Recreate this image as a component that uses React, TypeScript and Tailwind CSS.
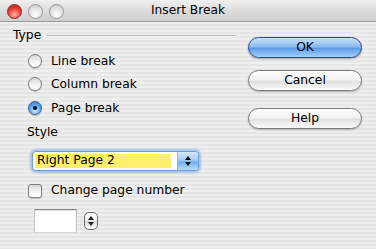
import React from "react";

const font = { fontFamily: '"DejaVu Sans", "Liberation Sans", sans-serif' };

function Radio({ checked, label }: { checked?: boolean; label: string }) {
  return (
    <div className="flex h-[23.5px] items-center pl-[28px]">
      {checked ? (
        <div className="flex h-[14px] w-[14px] items-center justify-center rounded-full border border-[#3b5f95] bg-[radial-gradient(circle_at_50%_75%,#c8ecff_0%,#6aaef0_45%,#2f78d4_100%)] shadow-[0_1px_1px_rgba(0,0,0,0.25)]">
          <div className="h-[4px] w-[4px] rounded-full bg-[#111]" />
        </div>
      ) : (
        <div className="h-[14px] w-[14px] rounded-full border border-[#7d7d7d] bg-[linear-gradient(180deg,#d6d6d6_0%,#f4f4f4_55%,#ffffff_100%)] shadow-[0_1px_1px_rgba(0,0,0,0.2)]" />
      )}
      <span className="ml-[9px] text-[12.3px] text-black">{label}</span>
    </div>
  );
}

function AquaButton({ label, primary }: { label: string; primary?: boolean }) {
  return (
    <div
      className={
        primary
          ? "flex h-[21px] w-[114px] items-center justify-center rounded-full border border-[#2a4b85] bg-[linear-gradient(180deg,#c9e0f8_0%,#8dbdf0_45%,#5d9de6_55%,#9fd0fb_100%)] text-[12.3px] text-black shadow-[0_1px_2px_rgba(0,0,0,0.35)]"
          : "flex h-[21px] w-[114px] items-center justify-center rounded-full border border-[#7a7a7a] bg-[linear-gradient(180deg,#ffffff_0%,#f2f2f2_45%,#e2e2e2_55%,#fafafa_100%)] text-[12.3px] text-black shadow-[0_1px_2px_rgba(0,0,0,0.25)]"
      }
    >
      {label}
    </div>
  );
}

function Stepper({ blue }: { blue?: boolean }) {
  return (
    <svg width="8" height="12" viewBox="0 0 8 12">
      <path d="M4 1 L7 5 L1 5 Z" fill={blue ? "#111" : "#222"} />
      <path d="M4 11 L7 7 L1 7 Z" fill={blue ? "#111" : "#222"} />
    </svg>
  );
}

export default function App() {
  return (
    <div
      style={font}
      className="flex h-[249px] w-[376px] flex-col overflow-hidden bg-[#ececec]"
    >
      {/* Title bar */}
      <div className="relative flex h-[22px] shrink-0 items-center justify-center rounded-t-[5px] border-b border-[#9a9a9a] bg-[linear-gradient(180deg,#f0f0f0_0%,#dcdcdc_50%,#cfcfcf_100%)]">
        <div className="absolute left-[7px] top-[4px] flex gap-[6px]">
          <div className="h-[15px] w-[15px] rounded-full border border-[#8c2a22] bg-[radial-gradient(circle_at_50%_75%,#ffb3a8_0%,#e8443a_50%,#b01f17_100%)]" />
          <div className="h-[15px] w-[15px] rounded-full border border-[#9a9a9a] bg-[radial-gradient(circle_at_50%_75%,#ffffff_0%,#e2e2e2_55%,#c4c4c4_100%)]" />
          <div className="h-[15px] w-[15px] rounded-full border border-[#9a9a9a] bg-[radial-gradient(circle_at_50%_75%,#ffffff_0%,#e2e2e2_55%,#c4c4c4_100%)]" />
        </div>
        <span className="text-[12.2px] text-black">Insert Break</span>
      </div>

      {/* Body */}
      <div className="flex flex-1 bg-[image:repeating-linear-gradient(180deg,#eeeeee_0px,#eeeeee_2px,#e6e6e6_2px,#e6e6e6_4px)]">
        {/* Left column */}
        <div className="flex w-[236px] flex-col">
          <div className="mt-[5px] flex h-[16px] items-center pl-[13px]">
            <span className="text-[12.3px] text-black">Type</span>
            <div className="ml-[5px] mt-[1px] h-[1px] flex-1 bg-[#b8b8b8] shadow-[0_1px_0_#fafafa]" />
          </div>
          <div className="mt-[6px]">
            <Radio label="Line break" />
            <Radio label="Column break" />
            <Radio checked label="Page break" />
          </div>
          <div className="mt-[5px] flex h-[16px] items-center pl-[27px]">
            <span className="text-[12.3px] text-black">Style</span>
          </div>

          {/* Select */}
          <div className="ml-[32px] mt-[10px] flex h-[20px] w-[167px] rounded-[4px] border border-[#6c9bd6] bg-white shadow-[0_0_2px_2px_rgba(110,160,225,0.55)]">
            <div className="flex flex-1 items-center py-[2px] pl-[2px]">
              <div className="flex h-full w-[136px] items-center bg-[#fdef6b] pl-[2px] text-[12.3px] text-black">
                Right Page 2
              </div>
            </div>
            <div className="flex w-[21px] items-center justify-center rounded-r-[3px] border-l border-[#8fb3de] bg-[linear-gradient(180deg,#d6e8fb_0%,#a6cbf3_45%,#74aef0_55%,#b7dcfd_100%)]">
              <Stepper blue />
            </div>
          </div>

          {/* Checkbox */}
          <div className="mt-[12px] flex h-[16px] items-center pl-[28px]">
            <div className="h-[14px] w-[14px] rounded-[3px] border border-[#7d7d7d] bg-[linear-gradient(180deg,#dadada_0%,#f4f4f4_55%,#ffffff_100%)] shadow-[0_1px_1px_rgba(0,0,0,0.2)]" />
            <span className="ml-[9px] text-[12.3px] text-black">Change page number</span>
          </div>

          {/* Number field */}
          <div className="ml-[34px] mt-[10px] flex items-center">
            <div className="h-[24px] w-[43px] border border-t-[#8a8a8a] border-x-[#c0c0c0] border-b-[#d8d8d8] bg-white shadow-[inset_0_1px_1px_rgba(0,0,0,0.15)]" />
            <div className="ml-[7px] flex h-[18px] w-[14px] items-center justify-center rounded-[5px] border border-[#6e6e6e] bg-[linear-gradient(180deg,#ffffff_0%,#ededed_50%,#dcdcdc_52%,#fafafa_100%)]">
              <Stepper />
            </div>
          </div>
        </div>

        {/* Right column */}
        <div className="ml-[12px] flex flex-col pt-[15px]">
          <AquaButton primary label="OK" />
          <div className="mt-[12px]">
            <AquaButton label="Cancel" />
          </div>
          <div className="mt-[17px]">
            <AquaButton label="Help" />
          </div>
        </div>
      </div>
    </div>
  );
}
